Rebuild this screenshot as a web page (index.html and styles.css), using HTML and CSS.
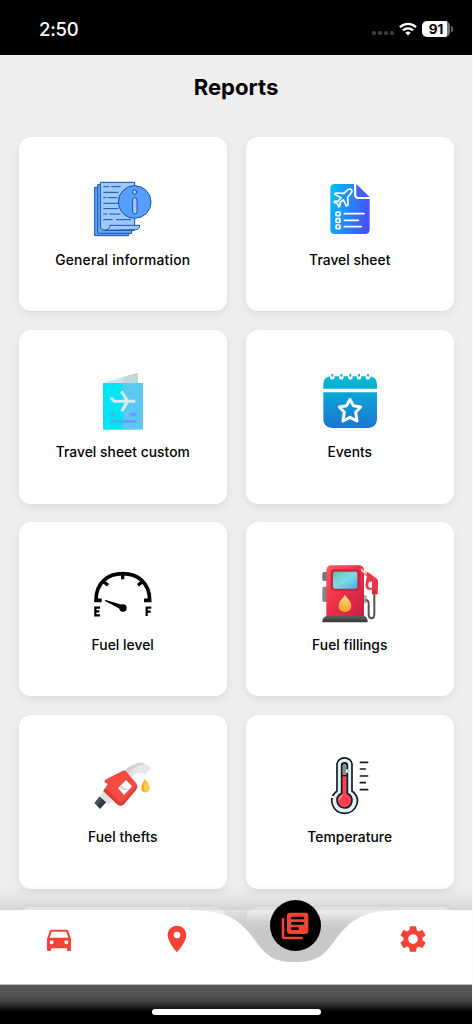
FILE: index.html
```html
<!DOCTYPE html>
<html lang="en">
<head>
    <meta charset="UTF-8">
    <meta name="viewport" content="width=device-width, initial-scale=1.0">
    <title>Reports</title>
    <link rel="stylesheet" href="styles.css">
</head>
<body>
    <div class="screen">
        <header class="status-bar">
            <span class="time">2:50</span>
            <div class="status-icons">
                <div class="signal"><i></i><i></i><i></i><i></i></div>
                <svg class="wifi" viewBox="0 0 18 13">
                    <path d="M1 4.6a11.6 11.6 0 0 1 16 0" fill="none" stroke="#fff" stroke-width="2.4"/>
                    <path d="M4 7.8a7.2 7.2 0 0 1 10 0" fill="none" stroke="#fff" stroke-width="2.3"/>
                    <path d="M6.3 10.2a4 4 0 0 1 5.4 0L9 13z" fill="#fff"/>
                </svg>
                <div class="battery">91</div>
            </div>
        </header>

        <main class="content">
            <h1>Reports</h1>
            <div class="grid">
                <div class="card">
                    <svg class="icon" viewBox="39 27 180 180">
                        <g stroke="#1c4fa0" stroke-width="3" stroke-linejoin="round">
                            <path d="M44 52h102v145H44z" fill="#5aa5ff"/>
                            <path d="M53 44h102v146H53z" fill="#66adff"/>
                            <path d="M61 37h103v144H74c-8 0-13-5-13-12z" fill="#9ccaff"/>
                            <path d="M90 166h89c0 8-4 13-12 13l-93 2c10 0 14-5 16-15z" fill="#9ccaff"/>
                            <path d="M70 50h18m6 0h28M70 67h45M70 83h8m4 0h30M70 100h44M70 116h44M70 132h12m6 0h34M70 149h28m10 0h45" fill="none"/>
                            <circle cx="164" cy="96" r="49" fill="#559fff"/>
                            <circle cx="164" cy="66" r="6.5" fill="#9ccaff"/>
                            <rect x="158" y="83" width="13" height="49" rx="6" fill="#9ccaff"/>
                        </g>
                    </svg>
                    <span class="label wide">General information</span>
                </div>
                <div class="card">
                    <svg class="icon" viewBox="29 27 180 180">
                        <defs>
                            <linearGradient id="sheet" x1="0" x2="1" y1=".35" y2=".65">
                                <stop offset="0" stop-color="#06b9fb"/>
                                <stop offset="1" stop-color="#4a4df6"/>
                            </linearGradient>
                        </defs>
                        <path d="M73 42h58v33c0 7 5 12 12 12h35v92c0 8-5 13-13 13H73c-8 0-13-5-13-13V55c0-8 5-13 13-13z" fill="url(#sheet)"/>
                        <path d="M138 42l40 39h-34c-4 0-6-2-6-6z" fill="#4a5df7"/>
                        <g fill="none" stroke="#fff" stroke-width="5" stroke-linecap="round" stroke-linejoin="round">
                            <path d="M123 59c-4-4-10-1-15 4l-7 7-25-1-3 4 19 10-9 11-9-1-3 3 10 5 4 10 4-4v-9l10-9 9 19 5-3-1-24 7-8c5-5 8-10 4-14z"/>
                            <rect x="77" y="126" width="12" height="11" rx="2"/>
                            <rect x="77" y="146" width="12" height="11" rx="2"/>
                            <rect x="77" y="165" width="12" height="11" rx="2"/>
                            <path d="M102 131h59M102 151h42M102 170h51"/>
                        </g>
                    </svg>
                    <span class="label">Travel sheet</span>
                </div>
                <div class="card">
                    <svg class="icon" viewBox="39 28 180 180">
                        <path d="M69 64l105-31v31z" fill="#d3e3e5"/>
                        <path d="M129 46l45-13v31h-45z" fill="#c4d8dc"/>
                        <path d="M69 64h60v140H69z" fill="#00e5f5"/>
                        <path d="M129 64h60v140h-60z" fill="#5bc9f1"/>
                        <path d="M92 108l11 11h63M124 89l19 29-18 31" fill="none" stroke="#dceaf0" stroke-width="9"/>
                        <path d="M89 154h19v10H89zM89 174h40v10H89z" fill="#39b9f0"/>
                        <path d="M149 154h20v10h-20zM129 174h40v10h-40z" fill="#639fff"/>
                    </svg>
                    <span class="label">Travel sheet custom</span>
                </div>
                <div class="card">
                    <svg class="icon" viewBox="29 28 180 180">
                        <defs>
                            <linearGradient id="calendar" gradientUnits="userSpaceOnUse" x1="0" x2="0" y1="44" y2="200">
                                <stop offset="0" stop-color="#06b9d4"/>
                                <stop offset=".3" stop-color="#0aa8d4"/>
                                <stop offset="1" stop-color="#1c74d4"/>
                            </linearGradient>
                        </defs>
                        <path d="M39 81V70c0-18 9-26 27-26h106c19 0 28 8 28 26v11zM39 92h161v78c0 19-10 29-28 29H67c-18 0-28-10-28-29z" fill="url(#calendar)"/>
                        <g fill="#fff">
                            <circle cx="66" cy="47" r="7"/><circle cx="93" cy="47" r="7"/><circle cx="120" cy="47" r="7"/><circle cx="146" cy="47" r="7"/><circle cx="173" cy="47" r="7"/>
                        </g>
                        <path d="M66 39v3m27-3v3m27-3v3m26-3v3m27-3v3" stroke="#06b9d4" stroke-width="6" stroke-linecap="round"/>
                        <path d="M119 113l10 19 22 4-15 16 4 26-21-11-21 11 4-26-15-16 22-4z" fill="none" stroke="#fff" stroke-width="9" stroke-linejoin="round"/>
                    </svg>
                    <span class="label">Events</span>
                </div>
                <div class="card">
                    <svg class="icon" viewBox="39 27 180 180">
                        <path d="M65 136H48c0-53 35-80 80-80s81 27 81 80h-17" fill="none" stroke="#000" stroke-width="11"/>
                        <path d="M128 59v14M71 80l13 11M187 80l-13 11" stroke="#000" stroke-width="10"/>
                        <path d="M75 134l55 17-4 14-51-27z"/>
                        <circle cx="129" cy="159" r="11"/>
                        <path d="M60 158H46v23h14M46 169h12M214 158h-14v25M200 170h12" fill="none" stroke="#000" stroke-width="6.5"/>
                    </svg>
                    <span class="label">Fuel level</span>
                </div>
                <div class="card">
                    <svg class="icon" viewBox="29 27 180 180">
                        <defs>
                            <linearGradient id="pump" x1="0" x2="1" y1="0" y2="1">
                                <stop offset="0" stop-color="#ff5a65"/>
                                <stop offset=".45" stop-color="#ee3148"/>
                                <stop offset="1" stop-color="#c91d44"/>
                            </linearGradient>
                            <linearGradient id="glass" x1="0" x2="1" y1="0" y2="1">
                                <stop offset="0" stop-color="#4fc9ad"/>
                                <stop offset=".5" stop-color="#7edbe4"/>
                                <stop offset="1" stop-color="#46abec"/>
                            </linearGradient>
                            <linearGradient id="oil" x1="0" x2="0" y1="0" y2="1">
                                <stop offset="0" stop-color="#ffe584"/>
                                <stop offset="1" stop-color="#ff9b23"/>
                            </linearGradient>
                            <linearGradient id="base" x1="0" x2="0" y1="0" y2="1">
                                <stop offset="0" stop-color="#606060"/>
                                <stop offset="1" stop-color="#343434"/>
                            </linearGradient>
                        </defs>
                        <rect x="36" y="51" width="20" height="27" rx="5" fill="#777"/>
                        <rect x="36" y="95" width="20" height="46" rx="6" fill="#858585"/>
                        <rect x="153" y="120" width="16" height="25" rx="5" fill="#aaa"/>
                        <path d="M166 135c11 0 9 9 9 25v16c0 18 17 18 17 0v-62" fill="none" stroke="#555" stroke-width="6"/>
                        <path d="M164 49l9 3 25 18c4 3 5 6 5 10v24h-31c-7-6-8-15-5-25l3-15-14-10z" fill="#e9374b"/>
                        <path d="M151 41l20 9-3 10-15-11z" fill="#ffc8b7"/>
                        <path d="M176 80h9v18h-9c-3-5-3-10 0-18z" fill="#fff"/>
                        <path d="M185 103h17v15h-17z" fill="#d72844"/>
                        <path d="M48 185V48c0-11 6-17 17-17h80c11 0 16 7 16 17v137z" fill="url(#pump)"/>
                        <path d="M151 39l11 8v9l-9-7z" fill="#ffc8b7"/>
                        <rect x="61" y="43" width="87" height="64" rx="10" fill="#c72642"/>
                        <rect x="68" y="50" width="73" height="51" rx="6" fill="url(#glass)"/>
                        <path d="M104 119c5 10 19 18 19 34 0 11-8 18-19 18s-19-7-19-18c0-16 14-24 19-34z" fill="url(#oil)"/>
                        <path d="M51 183h108c8 0 13 6 13 19H36c0-13 7-19 15-19z" fill="url(#base)"/>
                    </svg>
                    <span class="label">Fuel fillings</span>
                </div>
                <div class="card">
                    <svg class="icon" viewBox="39 26 180 180">
                        <path d="M130 75c22-25 52-35 83-14l-18 22c-14-12-30-8-43 11z" fill="#e6e6e6"/>
                        <path d="M130 75c22-25 52-35 68-24-20-1-39 10-56 34z" fill="#d2d2d2"/>
                        <path d="M196 94c7 12 13 17 13 27s-5 14-12 14-13-5-13-14 6-16 12-27z" fill="#ffc84a"/>
                        <path d="M196 94c-6 11-12 18-12 27 0 10 6 14 13 14-9-9-4-26-1-41z" fill="#f2ac30"/>
                        <path d="M59 147l19 18-18 19-17-17z" fill="#49505f"/>
                        <path d="M68 155l10 10-18 19-9-9z" fill="#353c49"/>
                        <path d="M71 130l28 31-14 9-25-25z" fill="#e2e2e2"/>
                        <path d="M74 105c-1-5 0-7 4-9l49-25c6-3 10 0 15 5l26 31c5 6 5 14 0 20l-35 42c-6 7-16 7-23 0l-40-38 13-21z" fill="#f44b43"/>
                        <path d="M70 131l6-8 37 36c7 7 13 7 19 1l33-39 7-7c0 5-1 9-4 13l-35 42c-6 7-16 7-23 0z" fill="#d93c38"/>
                        <path d="M76 123l39 34c6 5 11 5 16-1l36-42c0 3 0 5-3 8l-32 37c-6 6-12 6-19 0z" fill="#f44b43"/>
                        <path d="M138 98l18 19-24 26-18-20z" fill="#fff"/>
                        <path d="M120 117c9 0 7 13 22 9" fill="none" stroke="#c8c8c8" stroke-width="5"/>
                    </svg>
                    <span class="label">Fuel thefts</span>
                </div>
                <div class="card">
                    <svg class="icon" viewBox="29 26 180 180">
                        <path d="M80 131V52c0-27 45-27 45 0v79c31 23 13 67-22 67-36 0-53-44-23-67z" fill="#daf2fa" stroke="#17191d" stroke-width="5"/>
                        <path d="M61 149h10" stroke="#fff" stroke-width="6"/>
                        <path d="M94 138V54c0-10 17-10 17 0v84c24 11 14 44-8 44-23 0-33-32-9-44z" fill="#ff4052" stroke="#17191d" stroke-width="5"/>
                        <path d="M97 55c0-7 11-7 11 0v28H97z" fill="#76939f"/>
                        <path d="M94 85h17" stroke="#17191d" stroke-width="4"/>
                        <path d="M110 66v10" stroke="#fff" stroke-width="5"/>
                        <path d="M87 157a15 15 0 0 1 8-12" fill="none" stroke="#ff8993" stroke-width="5" stroke-linecap="round"/>
                        <path d="M150 45h22M150 65h15M150 86h22M150 106h15M150 127h22" stroke="#17191d" stroke-width="5" stroke-linecap="round"/>
                    </svg>
                    <span class="label">Temperature</span>
                </div>
                <div class="card"></div>
                <div class="card"></div>
            </div>
        </main>

        <nav class="nav">
            <svg class="nav-shape" viewBox="0 0 472 100">
                <defs>
                    <linearGradient id="shade" x1="0" x2="0" y1="0" y2="1">
                        <stop offset="0" stop-color="#8c8c8c" stop-opacity="0"/>
                        <stop offset=".5" stop-color="#8c8c8c" stop-opacity=".08"/>
                        <stop offset="1" stop-color="#8c8c8c" stop-opacity=".25"/>
                    </linearGradient>
                    <linearGradient id="notch" x1="0" x2="0" y1="0" y2="1">
                        <stop offset="0" stop-color="#c8c8c8" stop-opacity="0"/>
                        <stop offset=".3" stop-color="#c8c8c8" stop-opacity=".85"/>
                        <stop offset=".45" stop-color="#c8c8c8"/>
                    </linearGradient>
                </defs>
                <path d="M0 0h472v26H0z" fill="url(#shade)"/>
                <path d="M190 20h210v60H190z" fill="url(#notch)"/>
                <path d="M0 26.500h193c34 0 47 9 63 31 11 15 18 20.500 39 20.500s28-5.500 39-20.500c16-22 29-31 63-31h75v73.500H0z" fill="#fff"/>
            </svg>
            <div class="nav-items">
                <a class="nav-item">
                    <svg viewBox="0 0 24 24"><path d="M18.920 6.010C18.720 5.420 18.160 5 17.500 5h-11c-.66 0-1.210.42-1.420 1.010L3 12v8c0 .55.45 1 1 1h1c.55 0 1-.45 1-1v-1h12v1c0 .55.45 1 1 1h1c.55 0 1-.45 1-1v-8l-2.080-5.990zM6.500 16c-.83 0-1.500-.67-1.500-1.500S5.670 13 6.500 13s1.500.67 1.500 1.500S7.330 16 6.500 16zm11 0c-.83 0-1.500-.67-1.500-1.500s.67-1.500 1.500-1.500 1.500.67 1.500 1.500-.67 1.500-1.500 1.500zM5 11l1.500-4.500h11L19 11H5z"/></svg>
                </a>
                <a class="nav-item">
                    <svg viewBox="0 0 24 24"><path d="M12 2C8.130 2 5 5.130 5 9c0 5.250 7 13 7 13s7-7.750 7-13c0-3.870-3.130-7-7-7zm0 9.500a2.500 2.500 0 0 1 0-5 2.500 2.500 0 0 1 0 5z"/></svg>
                </a>
                <a class="nav-item active">
                    <svg viewBox="0 0 24 24"><path d="M3 6c-.6 0-1 .4-1 1v13c0 1.100.9 2 2 2h13c.6 0 1-.4 1-1s-.4-1-1-1H4V7c0-.6-.4-1-1-1zm17-4H8c-1.100 0-2 .9-2 2v12c0 1.100.9 2 2 2h12c1.100 0 2-.9 2-2V4c0-1.100-.9-2-2-2zm-2 9h-8c-1.300 0-1.300-2 0-2h8c1.300 0 1.300 2 0 2zm-4 4h-4c-1.300 0-1.300-2 0-2h4c1.300 0 1.300 2 0 2zm4-8h-8c-1.300 0-1.300-2 0-2h8c1.300 0 1.300 2 0 2z"/></svg>
                </a>
                <a class="nav-item">
                    <svg viewBox="0 0 24 24"><path d="M19.140 12.940c.04-.3.06-.61.06-.94 0-.32-.02-.64-.07-.94l2.030-1.580c.18-.14.23-.41.12-.61l-1.920-3.320c-.12-.22-.37-.29-.59-.22l-2.390.96c-.5-.38-1.030-.7-1.620-.94l-.36-2.540c-.04-.24-.24-.41-.48-.41h-3.840c-.24 0-.43.17-.47.41l-.36 2.540c-.59.24-1.130.57-1.620.94l-2.390-.96c-.22-.08-.47 0-.59.22L2.740 8.870c-.12.21-.08.47.12.61l2.030 1.580c-.05.3-.09.63-.09.94s.02.64.07.94l-2.030 1.580c-.18.14-.23.41-.12.61l1.920 3.320c.12.22.37.29.59.22l2.390-.96c.5.38 1.030.7 1.620.94l.36 2.540c.05.24.24.41.48.41h3.840c.24 0 .44-.17.47-.41l.36-2.540c.59-.24 1.130-.56 1.620-.94l2.390.96c.22.08.47 0 .59-.22l1.920-3.320c.12-.22.07-.47-.12-.61l-2.010-1.580zM12 15.600c-1.980 0-3.600-1.620-3.600-3.600s1.620-3.600 3.600-3.600 3.600 1.620 3.600 3.600-1.620 3.600-3.600 3.600z"/></svg>
                </a>
            </div>
        </nav>
        <footer class="home-area"><div class="home-bar"></div></footer>
    </div>
</body>
</html>
```
FILE: styles.css
```css
* {
    box-sizing: border-box;
}
body {
    margin: 0;
    background-color: #fafafa;
    font-family: Inter, "Liberation Sans", sans-serif;
}
.screen {
    width: 472px;
    height: 1024px;
    display: flex;
    flex-direction: column;
    overflow: hidden;
    background-color: #eee;
}

/* status bar */
.status-bar {
    flex: none;
    height: 55px;
    padding: 3px 22px 0 39px;
    display: flex;
    align-items: center;
    justify-content: space-between;
    background-color: #000;
    color: #fff;
}
.time {
    font-size: 18.500px;
    font-weight: 500;
    letter-spacing: -0.2px;
}
.status-icons {
    display: flex;
    align-items: center;
}
.signal {
    display: flex;
    gap: 2px;
    padding-top: 8px;
    margin-right: 5px;
}
.signal i {
    width: 4px;
    height: 4px;
    border-radius: 1.500px;
    background-color: #3c3c3c;
}
.wifi {
    width: 18px;
    height: 14px;
    margin-right: 5px;
}
.battery {
    position: relative;
    width: 28px;
    height: 16px;
    border-radius: 5px;
    background: linear-gradient(90deg, #fff 91%, #777 91%);
    color: #000;
    font-size: 13.500px;
    font-weight: 700;
    line-height: 16px;
    text-align: center;
}
.battery::after {
    content: "";
    position: absolute;
    right: -3px;
    top: 5px;
    width: 2px;
    height: 6px;
    border-radius: 0 2px 2px 0;
    background-color: #666;
}

/* report list, its last row runs under the navigation */
.content {
    flex: none;
    height: 915px;
    margin-bottom: -60px;
    overflow: hidden;
}
h1 {
    margin: 0;
    padding-top: 16px;
    height: 82.300px;
    font-size: 22.100px;
    font-weight: 700;
    line-height: 32px;
    text-align: center;
}
.grid {
    display: grid;
    grid-template-columns: 1fr 1fr;
    grid-auto-rows: 174px;
    gap: 18.500px;
    padding: 0 18px 0 18.500px;
}
.card {
    display: flex;
    flex-direction: column;
    align-items: center;
    justify-content: center;
    gap: 10px;
    border-radius: 12px;
    background-color: #fff;
    box-shadow: 0 3px 8px rgba(0, 0, 0, 0.08);
}
.icon {
    width: 60px;
    height: 60px;
}
.label {
    padding-top: 1px;
    font-size: 13.800px;
    font-weight: 500;
    line-height: 20px;
    letter-spacing: 0.05px;
    white-space: nowrap;
}
.label.wide {
    letter-spacing: 0.250px;
}

/* bottom navigation, curved around the active item */
.nav {
    position: relative;
    flex: none;
    height: 74px;
}
.nav-shape {
    position: absolute;
    left: 0;
    bottom: 0;
    width: 472px;
    height: 100px;
}
.nav-items {
    position: relative;
    display: grid;
    grid-template-columns: repeat(4, 1fr);
    padding-top: 13px;
}
.nav-item {
    display: flex;
    justify-content: center;
}
.nav-item svg {
    width: 32px;
    height: 32px;
    fill: #f44336;
}
.nav-item.active {
    align-items: center;
    justify-self: center;
    width: 51px;
    height: 51px;
    margin-top: -23px;
    border-radius: 50%;
    background-color: #000;
}
.home-area {
    flex: none;
    height: 40px;
    display: flex;
    justify-content: center;
    align-items: flex-end;
    padding-bottom: 9px;
    border-top: 1px solid #bbb;
    background: linear-gradient(#555 25%, #454545 40%, #000 70%);
}
.home-bar {
    width: 169px;
    height: 6px;
    border-radius: 3px;
    background-color: #fff;
}
```
